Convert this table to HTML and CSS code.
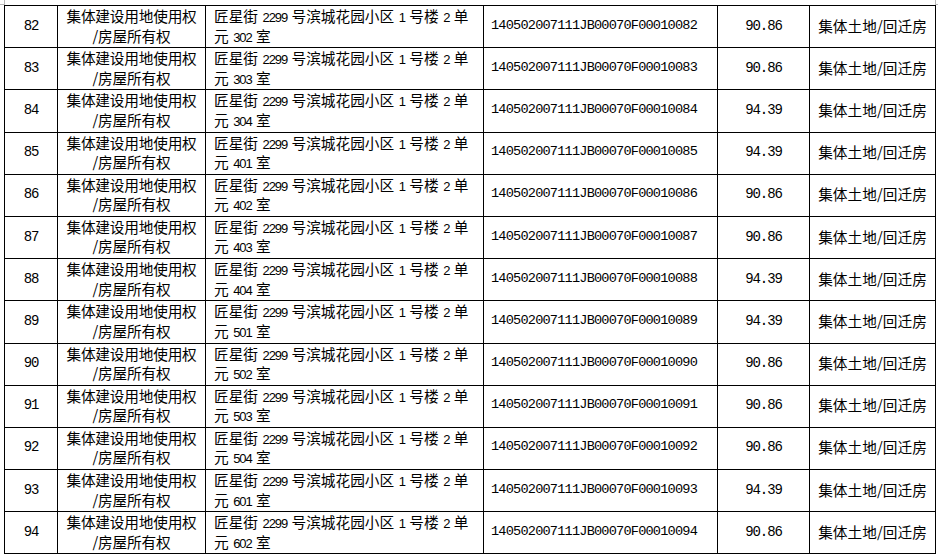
FILE: index.html
```html
<!DOCTYPE html>
<html lang="zh-CN">
<head>
<meta charset="utf-8">
<title>房屋登记表</title>
<link rel="stylesheet" href="styles.css">
</head>
<body>
<div class="mark mark-tl"></div>
<div class="mark mark-tr"></div>
<table class="grid">
  <colgroup>
    <col class="c1"><col class="c2"><col class="c3"><col class="c4"><col class="c5"><col class="c6">
  </colgroup>
  <tbody>
    <tr><td class="no">82</td><td class="kind">集体建设用地使用权<br>/房屋所有权</td><td class="addr">匠星街<span class="n"> 2299 </span>号滨城花园小区<span class="n"> 1 </span>号楼<span class="n"> 2 </span>单<br>元<span class="n"> 302 </span>室</td><td class="id">140502007111JB00070F00010082</td><td class="area">90.86</td><td class="type">集体土地<span class="sl">/</span>回迁房</td></tr>
    <tr><td class="no">83</td><td class="kind">集体建设用地使用权<br>/房屋所有权</td><td class="addr">匠星街<span class="n"> 2299 </span>号滨城花园小区<span class="n"> 1 </span>号楼<span class="n"> 2 </span>单<br>元<span class="n"> 303 </span>室</td><td class="id">140502007111JB00070F00010083</td><td class="area">90.86</td><td class="type">集体土地<span class="sl">/</span>回迁房</td></tr>
    <tr><td class="no">84</td><td class="kind">集体建设用地使用权<br>/房屋所有权</td><td class="addr">匠星街<span class="n"> 2299 </span>号滨城花园小区<span class="n"> 1 </span>号楼<span class="n"> 2 </span>单<br>元<span class="n"> 304 </span>室</td><td class="id">140502007111JB00070F00010084</td><td class="area">94.39</td><td class="type">集体土地<span class="sl">/</span>回迁房</td></tr>
    <tr><td class="no">85</td><td class="kind">集体建设用地使用权<br>/房屋所有权</td><td class="addr">匠星街<span class="n"> 2299 </span>号滨城花园小区<span class="n"> 1 </span>号楼<span class="n"> 2 </span>单<br>元<span class="n"> 401 </span>室</td><td class="id">140502007111JB00070F00010085</td><td class="area">94.39</td><td class="type">集体土地<span class="sl">/</span>回迁房</td></tr>
    <tr><td class="no">86</td><td class="kind">集体建设用地使用权<br>/房屋所有权</td><td class="addr">匠星街<span class="n"> 2299 </span>号滨城花园小区<span class="n"> 1 </span>号楼<span class="n"> 2 </span>单<br>元<span class="n"> 402 </span>室</td><td class="id">140502007111JB00070F00010086</td><td class="area">90.86</td><td class="type">集体土地<span class="sl">/</span>回迁房</td></tr>
    <tr><td class="no">87</td><td class="kind">集体建设用地使用权<br>/房屋所有权</td><td class="addr">匠星街<span class="n"> 2299 </span>号滨城花园小区<span class="n"> 1 </span>号楼<span class="n"> 2 </span>单<br>元<span class="n"> 403 </span>室</td><td class="id">140502007111JB00070F00010087</td><td class="area">90.86</td><td class="type">集体土地<span class="sl">/</span>回迁房</td></tr>
    <tr><td class="no">88</td><td class="kind">集体建设用地使用权<br>/房屋所有权</td><td class="addr">匠星街<span class="n"> 2299 </span>号滨城花园小区<span class="n"> 1 </span>号楼<span class="n"> 2 </span>单<br>元<span class="n"> 404 </span>室</td><td class="id">140502007111JB00070F00010088</td><td class="area">94.39</td><td class="type">集体土地<span class="sl">/</span>回迁房</td></tr>
    <tr><td class="no">89</td><td class="kind">集体建设用地使用权<br>/房屋所有权</td><td class="addr">匠星街<span class="n"> 2299 </span>号滨城花园小区<span class="n"> 1 </span>号楼<span class="n"> 2 </span>单<br>元<span class="n"> 501 </span>室</td><td class="id">140502007111JB00070F00010089</td><td class="area">94.39</td><td class="type">集体土地<span class="sl">/</span>回迁房</td></tr>
    <tr><td class="no">90</td><td class="kind">集体建设用地使用权<br>/房屋所有权</td><td class="addr">匠星街<span class="n"> 2299 </span>号滨城花园小区<span class="n"> 1 </span>号楼<span class="n"> 2 </span>单<br>元<span class="n"> 502 </span>室</td><td class="id">140502007111JB00070F00010090</td><td class="area">90.86</td><td class="type">集体土地<span class="sl">/</span>回迁房</td></tr>
    <tr><td class="no">91</td><td class="kind">集体建设用地使用权<br>/房屋所有权</td><td class="addr">匠星街<span class="n"> 2299 </span>号滨城花园小区<span class="n"> 1 </span>号楼<span class="n"> 2 </span>单<br>元<span class="n"> 503 </span>室</td><td class="id">140502007111JB00070F00010091</td><td class="area">90.86</td><td class="type">集体土地<span class="sl">/</span>回迁房</td></tr>
    <tr><td class="no">92</td><td class="kind">集体建设用地使用权<br>/房屋所有权</td><td class="addr">匠星街<span class="n"> 2299 </span>号滨城花园小区<span class="n"> 1 </span>号楼<span class="n"> 2 </span>单<br>元<span class="n"> 504 </span>室</td><td class="id">140502007111JB00070F00010092</td><td class="area">90.86</td><td class="type">集体土地<span class="sl">/</span>回迁房</td></tr>
    <tr><td class="no">93</td><td class="kind">集体建设用地使用权<br>/房屋所有权</td><td class="addr">匠星街<span class="n"> 2299 </span>号滨城花园小区<span class="n"> 1 </span>号楼<span class="n"> 2 </span>单<br>元<span class="n"> 601 </span>室</td><td class="id">140502007111JB00070F00010093</td><td class="area">94.39</td><td class="type">集体土地<span class="sl">/</span>回迁房</td></tr>
    <tr><td class="no">94</td><td class="kind">集体建设用地使用权<br>/房屋所有权</td><td class="addr">匠星街<span class="n"> 2299 </span>号滨城花园小区<span class="n"> 1 </span>号楼<span class="n"> 2 </span>单<br>元<span class="n"> 602 </span>室</td><td class="id">140502007111JB00070F00010094</td><td class="area">90.86</td><td class="type">集体土地<span class="sl">/</span>回迁房</td></tr>
  </tbody>
</table>
</body>
</html>
```
FILE: styles.css
```css
html, body {
  margin: 0;
  padding: 0;
  background: #fff;
}
body {
  position: relative;
  padding: 5px 0 0 4px;
  font-family: "Noto Sans CJK SC", "Noto Sans", sans-serif;
  font-size: 14.67px;
  color: #000;
}
.mark {
  position: absolute;
  top: 0;
  width: 4px;
  height: 4px;
  border-color: #b8b8b8;
  border-style: solid;
}
.mark-tl {
  left: 0;
  border-width: 0 1px 1px 0;
}
.mark-tr {
  left: 935px;
  border-width: 0 0 1px 1px;
}
.grid {
  border-collapse: collapse;
  table-layout: fixed;
  width: 931px;
}
.c1 { width: 53px; }
.c2 { width: 148px; }
.c3 { width: 278px; }
.c4 { width: 234px; }
.c5 { width: 92px; }
.c6 { width: 126px; }
.grid td {
  border: 1px solid #000;
  height: 39.2px;
  padding: 0 0 2px 0;
  vertical-align: middle;
  line-height: 20px;
  white-space: nowrap;
  overflow: hidden;
}
.no, .area {
  text-align: center;
  font-family: "Liberation Mono", monospace;
  font-size: 14px;
  letter-spacing: -1.07px;
}
.grid .kind, .grid .addr {
  vertical-align: top;
  height: 41.2px;
  padding: 0;
  line-height: 19.5px;
}
.kind {
  text-align: center;
  letter-spacing: -0.2px;
}
.grid .addr {
  padding-left: 8px;
  text-align: left;
  letter-spacing: 0;
}
.addr .n {
  font-family: "Liberation Sans", sans-serif;
  font-size: 13px;
  line-height: 0;
  letter-spacing: -1.1px;
  word-spacing: 2px;
}
.grid .id {
  padding-left: 7px;
  text-align: left;
  font-family: "Liberation Mono", monospace;
  font-size: 13.6px;
  letter-spacing: -0.8px;
}
.type {
  text-align: center;
  letter-spacing: 0;
}
.type .sl {
  display: inline-block;
  width: 6px;
  text-align: center;
}
```
